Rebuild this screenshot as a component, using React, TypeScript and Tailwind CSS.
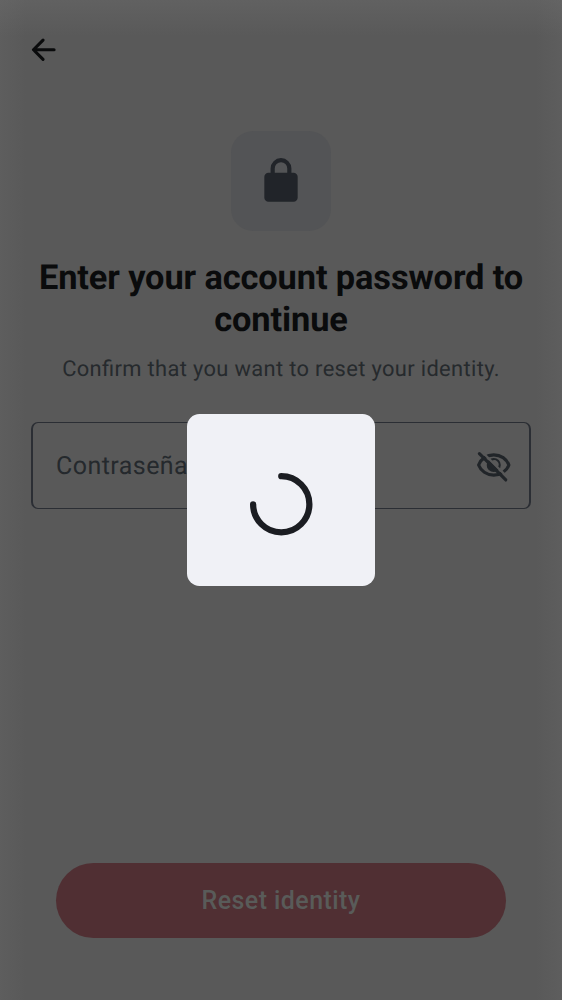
function BackIcon() {
  return (
    <svg className="size-[37.5px]" viewBox="0 0 24 24" fill="none" stroke="#0a0b0c" strokeWidth="2" strokeLinecap="round" strokeLinejoin="round">
      <path d="M18.6 12H5.6M11.55 5.85 5.4 12l6.15 6.15" />
    </svg>
  );
}

function LockIcon() {
  return (
    <svg className="size-[50px]" viewBox="0 0 24 24" fill="#212429">
      <path d="M6 22q-.825 0-1.412-.587A1.93 1.93 0 0 1 4 20V10q0-.825.588-1.412A1.93 1.93 0 0 1 6 8h1V6q0-2.075 1.463-3.537Q9.925 1 12 1t3.537 1.463T17 6v2h1q.825 0 1.413.588Q20 9.175 20 10v10q0 .825-.587 1.413A1.93 1.93 0 0 1 18 22zM9 8h6V6q0-1.250-.875-2.125A2.900 2.900 0 0 0 12 3q-1.250 0-2.125.875A2.900 2.900 0 0 0 9 6z" />
    </svg>
  );
}

function EyeOffIcon() {
  return (
    <svg className="size-[37.5px]" viewBox="0 0 24 24" fill="none">
      <path d="M2.300 11.500C3.700 7.700 7.500 5 12 5s8.300 2.700 9.700 6.500c-1.400 3.800-5.200 6.500-9.700 6.500s-8.300-2.700-9.700-6.500Z" stroke="#212529" strokeWidth="2" strokeLinejoin="round" />
      <circle cx="12" cy="11.500" r="4.500" fill="#212529" />
      <path d="M10.700 8.900a2.800 2.800 0 0 1 3.900 3.900Z" fill="#595959" />
      <path d="M4.300 2.900 21.300 19.900" stroke="#595959" strokeWidth="1.500" />
      <path d="M2.800 4.200 19.700 21.100" stroke="#212529" strokeWidth="2" strokeLinecap="round" />
    </svg>
  );
}

export default function App() {
  return (
    <main className="relative flex h-[1000px] w-[562px] flex-col overflow-hidden bg-[#595959] bg-[linear-gradient(to_bottom,rgba(112,112,112,0.35),transparent_36px),linear-gradient(to_right,rgba(112,112,112,0.2),transparent_26px,transparent_536px,rgba(112,112,112,0.2))] font-['Roboto',sans-serif] [text-rendering:geometricPrecision]">
      <header className="flex h-[100px] items-center pl-[25px]">
        <button aria-label="Back"><BackIcon /></button>
      </header>

      <section className="flex flex-col items-center pt-[31px] text-center">
        <div className="flex size-[100px] items-center justify-center rounded-[22px] bg-[#535456]">
          <LockIcon />
        </div>
        <h1 className="mt-[26px] w-[500px] text-[34.4px] leading-[42px] font-bold tracking-[-0.12px] text-[#0a0b0c]">
          Enter your account password to continue
        </h1>
        <p className="mt-[13px] text-[21.9px] leading-8 tracking-[0.34px] text-[#262a2d] [font-feature-settings:'liga'_1]">
          Confirm that you want to reset your identity.
        </p>
      </section>

      <div className="mx-[31px] mt-[36px] flex h-[87px] items-center justify-between rounded-[7px] border-x-2 border-y border-[#2b2e34] pr-[16.500px] pl-[23px]">
        <span className="pt-0.5 text-[25px] tracking-[0.45px] text-[#25292d]">Contraseña</span>
        <button aria-label="Show password"><EyeOffIcon /></button>
      </div>

      <button className="mx-[56px] mt-auto mb-[62.500px] h-[75px] shrink-0 rounded-full bg-[#502f33] pt-0.5 text-[25px] font-medium tracking-[0.42px] text-[#595b59]">
        Reset identity
      </button>

      <div className="absolute inset-0 flex items-center justify-center">
        <div role="status" aria-label="Loading" className="flex h-[172px] w-[187.500px] items-center justify-center rounded-[12.5px] bg-[#f0f1f6] pt-[9px]">
          <svg className="size-[62.500px] overflow-visible" viewBox="0 0 40 40" fill="none" stroke="#1b1d22" strokeWidth="4" strokeLinecap="round">
            <path d="M20 2a18 18 0 1 1-18 18" />
          </svg>
        </div>
      </div>
    </main>
  );
}
